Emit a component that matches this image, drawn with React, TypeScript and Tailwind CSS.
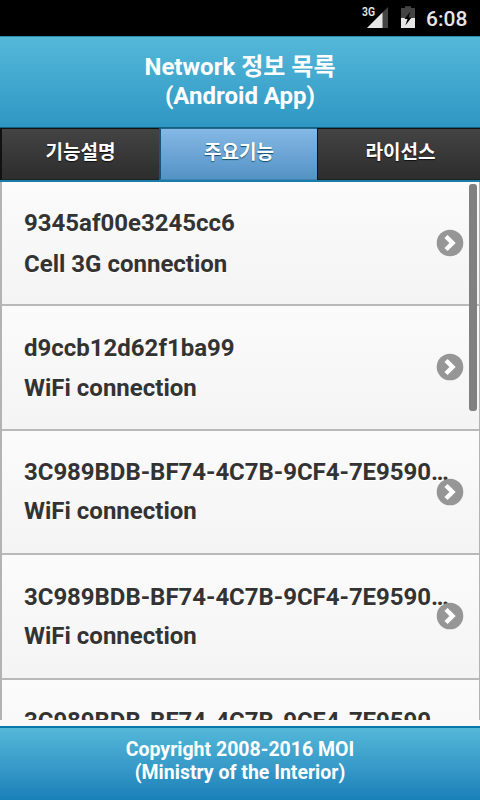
const rows = [
  { id: '9345af00e3245cc6', type: 'Cell 3G connection', box: 'h-[124px] pt-[27px] gap-[13px]' },
  { id: 'd9ccb12d62f1ba99', type: 'WiFi connection', box: 'h-[125px] pt-7 gap-3' },
  { id: '3C989BDB-BF74-4C7B-9CF4-7E9590…', type: 'WiFi connection', box: 'h-[124px] pt-[27px] gap-[11px] tracking-[-0.04px]' },
  { id: '3C989BDB-BF74-4C7B-9CF4-7E9590…', type: 'WiFi connection', box: 'h-[125px] pt-7 gap-[11px] tracking-[-0.04px]' },
  { id: '3C989BDB-BF74-4C7B-9CF4-7E9590…', type: 'WiFi connection', box: 'h-[125px] pt-[27px] gap-[11px] tracking-[-0.04px]' },
];

function StatusBar() {
  return (
    <div className="flex h-9 shrink-0 items-start bg-black text-[#e6e6e6]">
      <svg className="ml-[360px] shrink-0" width="60" height="36" viewBox="0 0 60 36">
        <path d="M28 7V28H7Z" fill="#444" />
        <path d="M22.500 12.500V28H7Z" fill="#e6e6e6" />
        <text x="2" y="16.300" fill="#e6e6e6" fontSize="12" fontWeight="600" fontFamily="Roboto, sans-serif" textLength="13" lengthAdjust="spacingAndGlyphs">3G</text>
        <path d="M41 8H45V6.300H51V8H55V28H41Z" fill="#444" />
        <path d="M41 18H55V28H41Z" fill="#e6e6e6" />
        <path d="M50.500 11.500L44.500 19H47.500L45.300 25.500L51.500 17.500H48.500Z" fill="#000" />
      </svg>
      <span className="ml-[6px] mt-[6px] text-[21px] font-medium leading-[26px]">6:08</span>
    </div>
  );
}

function Header() {
  return (
    <header className="h-[91px] shrink-0 border-t border-[#2f88ad] bg-linear-to-b from-[#54b8d9] to-[#2d97c3] pt-4 text-center text-[24px] font-bold leading-[29px] text-white">
      <h1>Network 정보 목록<br />(Android App)</h1>
    </header>
  );
}

function Tabs() {
  const dark = 'border-t border-b border-t-[#111] border-b-[#202020] bg-linear-to-b from-[#444] to-[#2d2d2d] pt-[11px] [text-shadow:0_1px_1px_#111]';
  return (
    <nav className="flex h-[55px] shrink-0 border-b-2 border-t border-b-[#1a7caa] border-t-[#155f80] text-center text-[19px] font-bold leading-[25px] text-white">
      <div className={'w-[159px] border-l-2 border-l-[#111] ' + dark}>기능설명</div>
      <div className="w-[158px] border-b border-l-2 border-t border-b-[#3f80ae] border-l-[#155678] border-t-[#24678d] bg-linear-to-b from-[#85b8e5] to-[#5393c5] pt-[11px] [text-shadow:0_1px_1px_#145072]">주요기능</div>
      <div className={'w-[163px] border-l border-l-[#111] pl-[3px] ' + dark}>라이선스</div>
    </nav>
  );
}

function Arrow() {
  return (
    <svg className="absolute left-[434px] top-[47px]" width="28" height="28" viewBox="0 0 28 28">
      <circle cx="14" cy="14" r="13.300" fill="#969696" />
      <path d="M10 7.500L16.500 14L10 20.500" fill="none" stroke="#fff" strokeWidth="4.500" />
    </svg>
  );
}

export default function App() {
  return (
    <div className="flex h-[800px] w-[480px] flex-col overflow-hidden bg-[#f9f9f9] font-['Roboto','Noto_Sans_CJK_KR',sans-serif]">
      <StatusBar />
      <Header />
      <Tabs />
      <main className="relative h-[538px] shrink-0 overflow-hidden border-l-2 border-r border-[#b3b3b3]">
        {rows.map((r, i) => (
          <div key={i} className={`relative flex flex-col border-b-2 border-[#b9b9b9] bg-linear-to-b from-[#fbfbfb] to-[#f4f4f4] pl-[22px] text-[24px] font-bold leading-7 text-[#333] [text-shadow:0_1px_0_#fff] ${r.box}`}>
            <div className="whitespace-nowrap">{r.id}</div>
            <div className="tracking-normal">{r.type}</div>
            <Arrow />
          </div>
        ))}
        <div className="absolute left-[467px] top-[2px] h-[227px] w-2 rounded-[3px] bg-[#808080]" />
      </main>
      <footer className="mt-[6px] h-[74px] shrink-0 border-t-2 border-[#0a79aa] bg-linear-to-b from-[#54b8d9] to-[#1a80b9] pt-[10px] text-center text-[19.5px] font-bold leading-[23px] text-white">
        Copyright 2008-2016 MOI<br />(Ministry of the Interior)
      </footer>
    </div>
  );
}
